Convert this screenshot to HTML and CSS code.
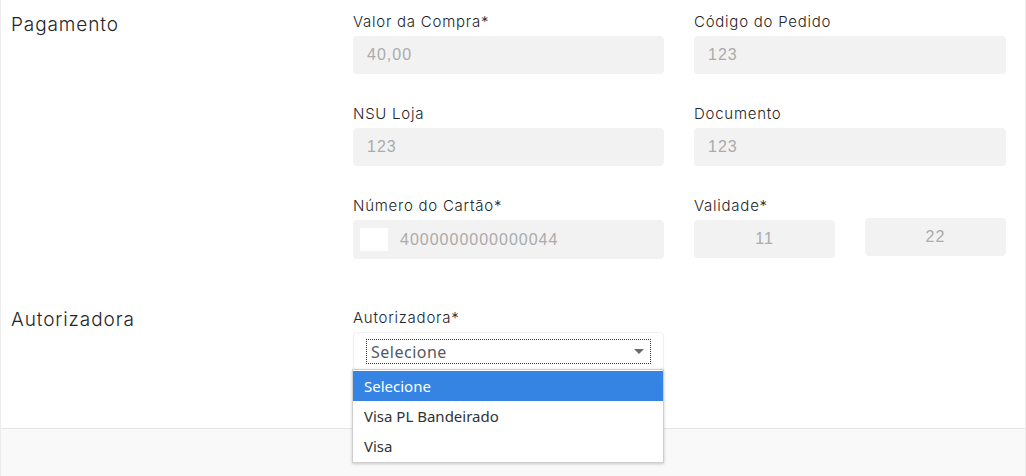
FILE: index.html
```html
<!DOCTYPE html>
<html lang="pt-BR">
<head>
<meta charset="utf-8">
<title>Pagamento</title>
<link rel="stylesheet" href="styles.css">
</head>
<body>
<div class="card">
  <section class="section section-pay">
    <h2 class="section-title">Pagamento</h2>
    <div class="fields">
      <div class="field">
        <label class="label">Valor da Compra*</label>
        <div class="input">40,00</div>
      </div>
      <div class="field">
        <label class="label">Código do Pedido</label>
        <div class="input">123</div>
      </div>
      <div class="field">
        <label class="label">NSU Loja</label>
        <div class="input">123</div>
      </div>
      <div class="field">
        <label class="label">Documento</label>
        <div class="input">123</div>
      </div>
      <div class="field">
        <label class="label">Número do Cartão*</label>
        <div class="input input-card"><span class="card-flag"></span><span>4000000000000044</span></div>
      </div>
      <div class="field">
        <label class="label">Validade*</label>
        <div class="validity">
          <div class="input input-center">11</div>
          <div class="input input-center input-up">22</div>
        </div>
      </div>
    </div>
  </section>
  <section class="section section-auth">
    <h2 class="section-title">Autorizadora</h2>
    <div class="fields">
      <div class="field">
        <label class="label">Autorizadora*</label>
        <div class="select">
          <div class="select-focus">
            <span class="select-value">Selecione</span>
            <span class="select-arrow"></span>
          </div>
          <ul class="dropdown">
            <li class="option option-active">Selecione</li>
            <li class="option">Visa PL Bandeirado</li>
            <li class="option">Visa</li>
          </ul>
        </div>
      </div>
    </div>
  </section>
  <footer class="footer"></footer>
</div>
</body>
</html>
```

FILE: styles.css
```css
* { box-sizing: border-box; }
html, body { margin: 0; padding: 0; background: #ffffff; }
body {
  font-family: Inter, "Noto Sans", sans-serif;
  color: #1f2529;
  width: 1026px;
  height: 476px;
  overflow: hidden;
}
.card {
  border-left: 1px solid #ececec;
  border-right: 1px solid #ececec;
  min-height: 476px;
  display: flex;
  flex-direction: column;
}
.section {
  display: flex;
  padding-left: 10px;
}
.section-pay { padding-top: 11px; }
.section-auth { padding-top: 48px; padding-bottom: 58px; }
.section-title {
  margin: 0;
  width: 342px;
  font-size: 19px;
  font-weight: 350;
  line-height: 26px;
  letter-spacing: 0.9px;
  color: #1f2529;
}
.section-pay .section-title { margin-top: 1px; }
.fields {
  display: grid;
  grid-template-columns: 311px 312px;
  column-gap: 30px;
  row-gap: 29px;
}
.field {
  display: flex;
  flex-direction: column;
}
.label {
  font-size: 15px;
  font-weight: 350;
  line-height: 20px;
  letter-spacing: 0.75px;
  padding-top: 1px;
  margin-bottom: 4px;
  color: #1f2529;
}
.input {
  height: 38px;
  background: #f2f2f2;
  border-radius: 4px;
  padding: 0 14px;
  display: flex;
  align-items: center;
  font-family: "Liberation Sans", Arial, sans-serif;
  font-size: 16px;
  letter-spacing: 1px;
  color: #ababab;
}
.input-card {
  padding-left: 7px;
  gap: 12px;
  height: 39px;
}
.card-flag {
  width: 28px;
  height: 23px;
  background: #ffffff;
}
.validity {
  display: grid;
  grid-template-columns: 141px 141px;
  column-gap: 30px;
  align-items: start;
}
.input-center { justify-content: center; }
.input-up { margin-top: -2px; }
.select {
  position: relative;
  height: 38px;
  background: #ffffff;
  border: 1px solid #f0f0f0;
  border-radius: 4px;
  box-shadow: 0 1px 2px rgba(0,0,0,0.04);
  padding: 6px 12px 6px 12px;
}
.select-focus {
  height: 25px;
  border: 1px dotted #333;
  display: flex;
  align-items: center;
  justify-content: space-between;
  padding: 0 6px 0 4px;
  font-family: "Noto Sans", "Open Sans", sans-serif;
  font-size: 16px;
  letter-spacing: 0.5px;
  color: #555a60;
}
.select-arrow {
  width: 0;
  height: 0;
  border-left: 5px solid transparent;
  border-right: 5px solid transparent;
  border-top: 5px solid #6b6b6b;
}
.dropdown {
  position: absolute;
  left: -2px;
  top: 36px;
  width: 312px;
  margin: 0;
  padding: 1px 0;
  list-style: none;
  background: #ffffff;
  border: 1px solid #cfcfcf;
  box-shadow: 0 1px 3px rgba(0,0,0,0.2);
  font-family: "Noto Sans", "Open Sans", sans-serif;
  font-size: 15px;
  color: #2e3436;
  z-index: 2;
}
.option {
  height: 30px;
  line-height: 30px;
  padding-left: 11px;
}
.option-active {
  background: #3584e4;
  color: #ffffff;
}
.footer {
  flex: 1;
  background: #f9f9f9;
  border-top: 1px solid #e4e4e4;
}
```
